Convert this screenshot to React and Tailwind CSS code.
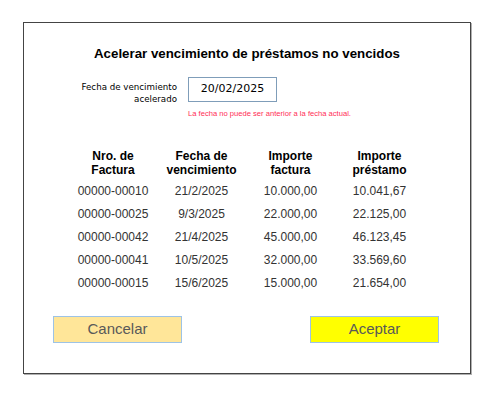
import React from 'react';

const filas = [
    ['00000-00010', '21/2/2025', '10.000,00', '10.041,67'],
    ['00000-00025', '9/3/2025', '22.000,00', '22.125,00'],
    ['00000-00042', '21/4/2025', '45.000,00', '46.123,45'],
    ['00000-00041', '10/5/2025', '32.000,00', '33.569,60'],
    ['00000-00015', '15/6/2025', '15.000,00', '21.654,00'],
];

const App = () => {
    return (
        <div className="w-[485px] h-[395px] bg-white pt-[22px] pl-[23px] font-['Liberation_Sans',Arial,sans-serif]">
            <div className="w-[448px] h-[352px] border border-[#444] shadow-[1px_1px_0_#b0b0b0] bg-white pt-[23px]">
                <h1 className="text-center text-[13.3px] leading-[16px] font-bold text-black">
                    Acelerar vencimiento de préstamos no vencidos
                </h1>

                <div className="flex mt-[15px] ml-[43px] gap-[11px]">
                    <label
                        htmlFor="fecha"
                        className="w-[110px] mt-[4px] text-right text-[8.7px] leading-[12px] text-black font-['DejaVu_Sans',sans-serif]"
                    >
                        Fecha de vencimiento
                        <br />
                        acelerado
                    </label>
                    <div className="flex flex-col">
                        <div
                            id="fecha"
                            className="w-[89px] h-[25px] border border-[#7f9db9] flex items-center justify-center text-[11px] text-black font-['DejaVu_Sans',sans-serif]"
                        >
                            20/02/2025
                        </div>
                        <p className="mt-[7px] text-[7.6px] leading-[10px] text-[#ff2d55] whitespace-nowrap">
                            La fecha no puede ser anterior a la fecha actual.
                        </p>
                    </div>
                </div>

                <div className="ml-[45px] mt-[30px] grid grid-cols-[88px_89px_89px_89px] text-center">
                    <div className="text-[12px] leading-[14px] font-bold text-black">Nro. de<br />Factura</div>
                    <div className="text-[12px] leading-[14px] font-bold text-black">Fecha de<br />vencimiento</div>
                    <div className="text-[12px] leading-[14px] font-bold text-black">Importe<br />factura</div>
                    <div className="text-[12px] leading-[14px] font-bold text-black">Importe<br />préstamo</div>
                </div>

                <div className="ml-[45px] mt-[3px] grid grid-cols-[88px_89px_89px_89px] text-center text-[12px] leading-[23px] text-[#333]">
                    {filas.map(fila => (
                        <React.Fragment key={fila[0]}>
                            {fila.map((celda, i) => (
                                <div key={i}>{celda}</div>
                            ))}
                        </React.Fragment>
                    ))}
                </div>

                <div className="flex justify-between pl-[29px] pr-[31px] mt-[21px]">
                    <button className="w-[129px] h-[27px] border border-[#9dc3e6] bg-[#ffe699] text-[15px] text-[#595959]">
                        Cancelar
                    </button>
                    <button className="w-[129px] h-[27px] border border-[#9dc3e6] bg-[#ffff00] text-[15px] text-[#595959]">
                        Aceptar
                    </button>
                </div>
            </div>
        </div>
    );
};

export default App;
